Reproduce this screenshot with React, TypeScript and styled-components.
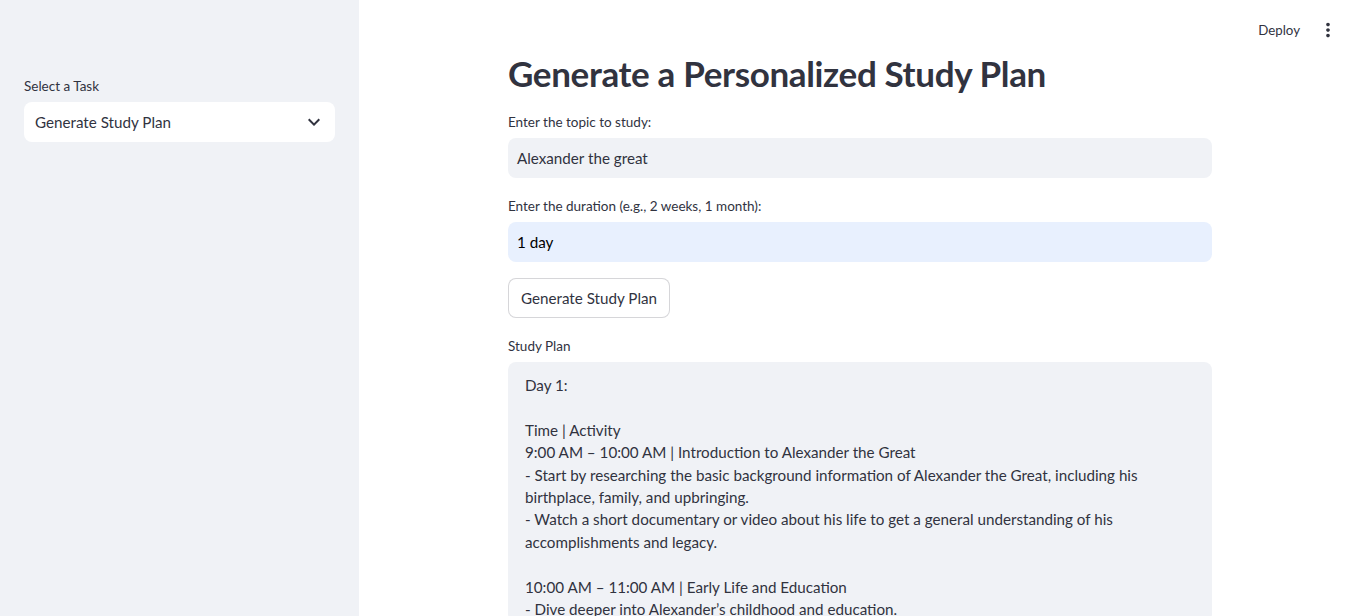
import React from "react";
import styled, { createGlobalStyle } from "styled-components";

const FONT = `Lato, "Noto Sans", sans-serif`;

const Global = createGlobalStyle`
  html, body { margin: 0; padding: 0; height: 100%; overflow: hidden; }
  body { font-family: ${FONT}; color: #31333f; background: #ffffff; }
  * { box-sizing: border-box; }
`;

const Shell = styled.div`
  display: flex;
  height: 100vh;
  width: 100vw;
  overflow: hidden;
`;

const Sidebar = styled.aside`
  width: 359px;
  flex: 0 0 359px;
  background: #f0f2f6;
  padding: 74px 24px 0 24px;
  display: flex;
  flex-direction: column;
`;

const Main = styled.main`
  position: relative;
  flex: 1;
  display: flex;
  justify-content: center;
  align-items: flex-start;
  padding-left: 8px;
  overflow: hidden;
`;

const Header = styled.header`
  position: absolute;
  top: 0;
  right: 0;
  height: 60px;
  display: flex;
  align-items: center;
  gap: 16px;
  padding-right: 13px;
`;

const DeployButton = styled.button`
  border: none;
  background: transparent;
  font-family: ${FONT};
  font-size: 13.3px;
  color: #31333f;
  padding: 0;
  cursor: pointer;
`;

const IconButton = styled.button`
  border: none;
  background: transparent;
  padding: 0;
  width: 24px;
  height: 24px;
  display: flex;
  align-items: center;
  justify-content: center;
  color: #31333f;
`;

const Column = styled.div`
  width: 704px;
  flex: 0 0 704px;
  display: flex;
  flex-direction: column;
  gap: 16px;
  padding-top: 52px;
  & > * {
    flex-shrink: 0;
  }
`;

const Title = styled.h1`
  margin: 0;
  font-family: ${FONT};
  font-size: 35px;
  letter-spacing: -0.35px;
  line-height: 42px;
  font-weight: 700;
  color: #31333f;
`;

const Field = styled.div`
  display: flex;
  flex-direction: column;
`;

const Label = styled.label`
  height: 24px;
  display: flex;
  align-items: center;
  font-size: 13.5px;
  margin-bottom: 4px;
  color: #31333f;
`;

const InputBox = styled.div<{ $autofill?: boolean }>`
  height: 40px;
  border-radius: 8px;
  background: ${(p) => (p.$autofill ? "#e8f0fe" : "#f0f2f6")};
  color: ${(p) => (p.$autofill ? "#000000" : "#31333f")};
  display: flex;
  align-items: center;
  padding: 0 9px;
  font-size: 15.2px;
`;

const SelectBox = styled.div`
  height: 40px;
  border-radius: 8px;
  background: #ffffff;
  display: flex;
  align-items: center;
  justify-content: space-between;
  padding: 0 9px 0 11px;
  font-size: 15.2px;
  color: #31333f;
`;

const Button = styled.button`
  align-self: flex-start;
  height: 40px;
  padding: 0 12px;
  border-radius: 8px;
  border: 1px solid rgba(49, 51, 63, 0.2);
  background: #ffffff;
  font-family: ${FONT};
  font-size: 15.2px;
  color: #31333f;
`;

const TextArea = styled.div`
  background: #f0f2f6;
  border-radius: 8px;
  padding: 12px 17px;
  height: 260px;
  font-size: 15.2px;
  line-height: 22.4px;
  white-space: pre;
  overflow: hidden;
  color: #31333f;
`;

const PLAN = `Day 1:

Time | Activity
9:00 AM – 10:00 AM | Introduction to Alexander the Great
- Start by researching the basic background information of Alexander the Great, including his
birthplace, family, and upbringing.
- Watch a short documentary or video about his life to get a general understanding of his
accomplishments and legacy.

10:00 AM – 11:00 AM | Early Life and Education
- Dive deeper into Alexander’s childhood and education.`;

const Chevron = () => (
  <svg width="24" height="24" viewBox="0 0 24 24" fill="#31333f">
    <path d="M16.59 8.59L12 13.17 7.41 8.59 6 10l6 6 6-6z" />
  </svg>
);

const MoreVert = () => (
  <svg width="22" height="22" viewBox="0 0 24 24" fill="#31333f">
    <path d="M12 8c1.1 0 2-.9 2-2s-.9-2-2-2-2 .9-2 2 .9 2 2 2zm0 2c-1.1 0-2 .9-2 2s.9 2 2 2 2-.9 2-2-.9-2-2-2zm0 6c-1.1 0-2 .9-2 2s.9 2 2 2 2-.9 2-2-.9-2-2-2z" />
  </svg>
);

export default function App() {
  return (
    <>
      <Global />
      <Shell>
        <Sidebar>
          <Field>
            <Label>Select a Task</Label>
            <SelectBox>
              <span>Generate Study Plan</span>
              <Chevron />
            </SelectBox>
          </Field>
        </Sidebar>
        <Main>
          <Header>
            <DeployButton>Deploy</DeployButton>
            <IconButton>
              <MoreVert />
            </IconButton>
          </Header>
          <Column>
            <Title>Generate a Personalized Study Plan</Title>
            <Field>
              <Label>Enter the topic to study:</Label>
              <InputBox>Alexander the great</InputBox>
            </Field>
            <Field>
              <Label>Enter the duration (e.g., 2 weeks, 1 month):</Label>
              <InputBox $autofill>1 day</InputBox>
            </Field>
            <Button>Generate Study Plan</Button>
            <Field>
              <Label>Study Plan</Label>
              <TextArea>{PLAN}</TextArea>
            </Field>
          </Column>
        </Main>
      </Shell>
    </>
  );
}
